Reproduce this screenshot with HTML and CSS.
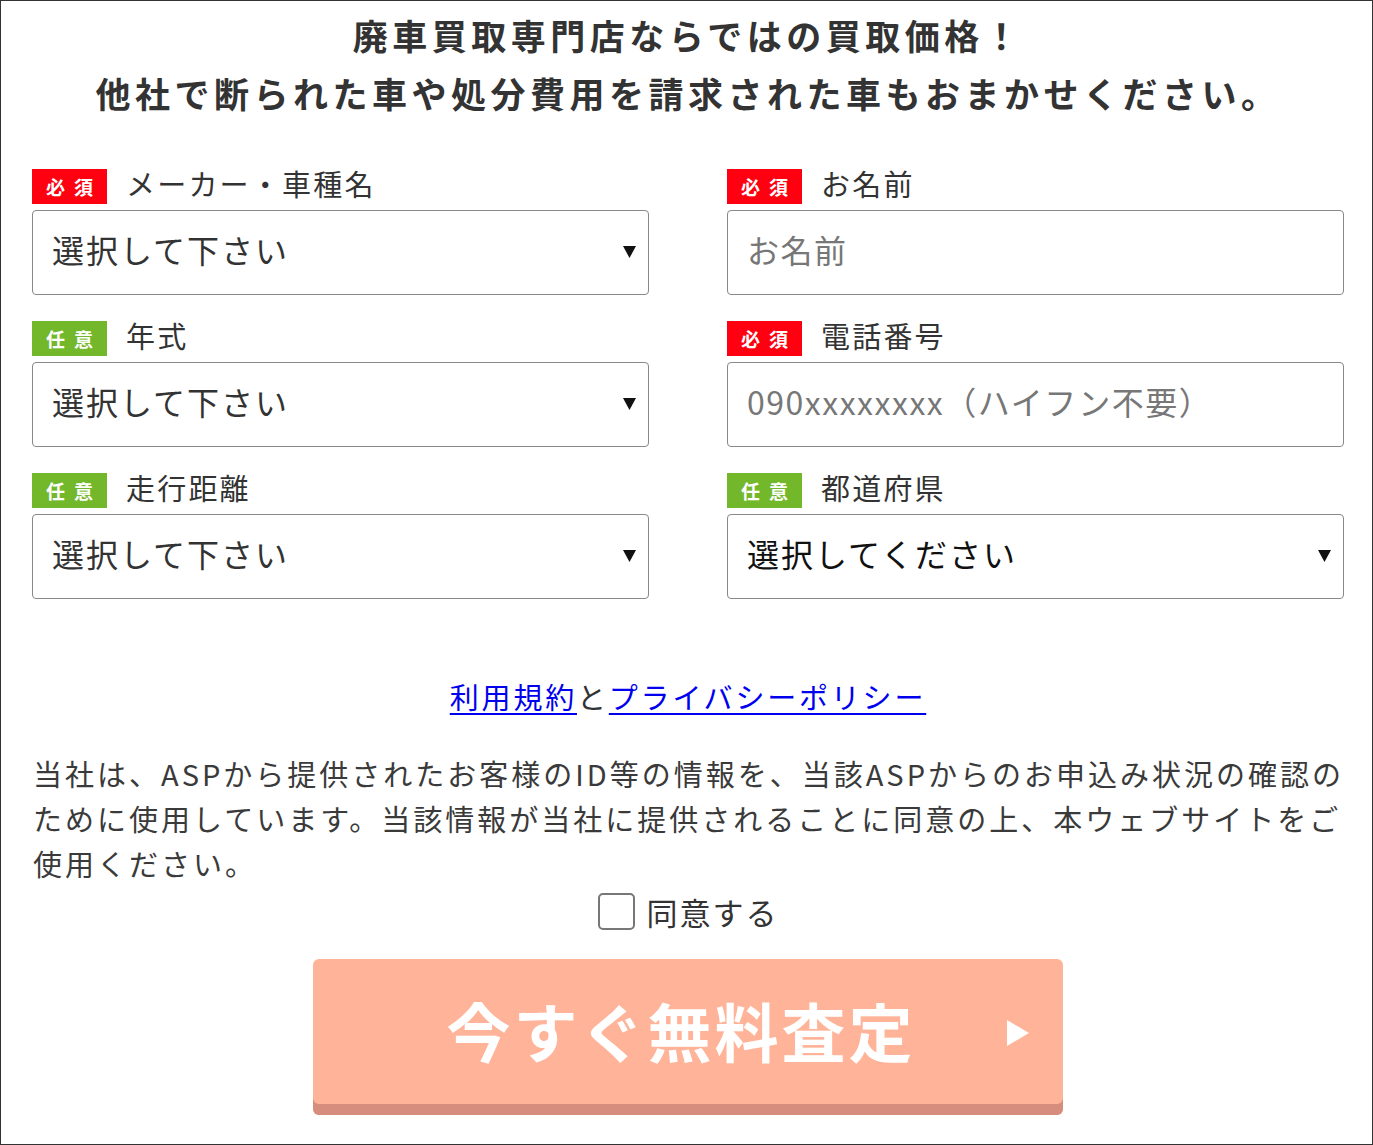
FILE: index.html
```html
<!DOCTYPE html>
<html lang="ja">
<head>
<meta charset="utf-8">
<title>無料査定フォーム</title>
<link rel="stylesheet" href="styles.css">
</head>
<body>
<div class="page">
  <h1 class="title">廃車買取専門店ならではの買取価格！<br>他社で断られた車や処分費用を請求された車もおまかせください。</h1>

  <div class="form-grid">
    <div class="col">
      <div class="field">
        <div class="label-row"><span class="badge badge-req">必須</span><span class="label">メーカー・車種名</span></div>
        <div class="select-wrap">
          <select class="control"><option>選択して下さい</option></select>
          <svg class="arrow" width="13" height="12" viewBox="0 0 13 12"><path d="M0 0H13L6.5 12Z" fill="#111"/></svg>
        </div>
      </div>
      <div class="field">
        <div class="label-row"><span class="badge badge-opt">任意</span><span class="label">年式</span></div>
        <div class="select-wrap">
          <select class="control"><option>選択して下さい</option></select>
          <svg class="arrow" width="13" height="12" viewBox="0 0 13 12"><path d="M0 0H13L6.5 12Z" fill="#111"/></svg>
        </div>
      </div>
      <div class="field">
        <div class="label-row"><span class="badge badge-opt">任意</span><span class="label">走行距離</span></div>
        <div class="select-wrap">
          <select class="control"><option>選択して下さい</option></select>
          <svg class="arrow" width="13" height="12" viewBox="0 0 13 12"><path d="M0 0H13L6.5 12Z" fill="#111"/></svg>
        </div>
      </div>
    </div>
    <div class="col">
      <div class="field">
        <div class="label-row"><span class="badge badge-req">必須</span><span class="label">お名前</span></div>
        <input class="control" type="text" placeholder="お名前">
      </div>
      <div class="field">
        <div class="label-row"><span class="badge badge-req">必須</span><span class="label">電話番号</span></div>
        <input class="control" type="tel" placeholder="090xxxxxxxx（ハイフン不要）">
      </div>
      <div class="field">
        <div class="label-row"><span class="badge badge-opt">任意</span><span class="label">都道府県</span></div>
        <div class="select-wrap">
          <select class="control dark"><option>選択してください</option></select>
          <svg class="arrow" width="13" height="12" viewBox="0 0 13 12"><path d="M0 0H13L6.5 12Z" fill="#111"/></svg>
        </div>
      </div>
    </div>
  </div>

  <p class="links"><a href="#">利用規約</a>と<a href="#">プライバシーポリシー</a></p>

  <p class="notice">当社は、ASPから提供されたお客様のID等の情報を、当該ASPからのお申込み状況の確認の<br>ために使用しています。当該情報が当社に提供されることに同意の上、本ウェブサイトをご<br>使用ください。</p>

  <label class="agree"><input type="checkbox" class="check"><span>同意する</span></label>

  <div class="submit-row">
    <button class="submit" type="button"><span class="submit-text">今すぐ無料査定</span><svg class="submit-arrow" width="22" height="26" viewBox="0 0 22 26"><path d="M0 0L22 13L0 26Z" fill="#fff"/></svg></button>
  </div>
</div>
</body>
</html>
```

FILE: styles.css
```css
* { box-sizing: border-box; }
html, body { margin: 0; padding: 0; background: #fff; }
body {
  font-family: "Noto Sans CJK JP", "Noto Sans", sans-serif;
  color: #333;
}
.page {
  width: 1373px;
  height: 1145px;
  border: 1px solid #333;
  padding: 0 28px 0 31px;
  overflow: hidden;
}
.title {
  margin: 5px 0 0;
  font-size: 35px;
  font-weight: 700;
  line-height: 58px;
  letter-spacing: 4.5px;
  text-align: center;
  color: #333;
}
.form-grid {
  margin-top: 47px;
  display: grid;
  grid-template-columns: 617px 617px;
  column-gap: 78px;
}
.field { margin-bottom: 26px; }
.col .field:last-child { margin-bottom: 0; }
.label-row {
  display: flex;
  align-items: center;
  height: 35px;
  margin-bottom: 6px;
}
.badge {
  width: 75px;
  height: 35px;
  display: inline-flex;
  align-items: center;
  justify-content: center;
  color: #fff;
  font-size: 19px;
  font-weight: 700;
  letter-spacing: 9px;
  padding-left: 9px;
  font-family: "Noto Sans CJK JP", serif;
}
.badge-req { background: #ff0010; }
.badge-opt { background: #73b72b; }
.label {
  margin-left: 19px;
  font-size: 29px;
  letter-spacing: 2.2px;
  color: #333;
  line-height: 1;
  margin-top: -6px;
}
.select-wrap { position: relative; }
.control {
  display: block;
  width: 100%;
  height: 85px;
  border: 1px solid #888;
  border-radius: 4px;
  background: #fff;
  padding: 0 0 8px 19px;
  font-family: "Noto Sans CJK JP", sans-serif;
  font-size: 32px;
  letter-spacing: 2px;
  color: #333;
  appearance: none;
  -webkit-appearance: none;
  outline: none;
}
.control.dark { color: #111; }
.control::placeholder { color: #777; letter-spacing: 1.5px; }
.arrow {
  position: absolute;
  right: 13px;
  top: 36px;
  pointer-events: none;
}
.links {
  margin: 75px 0 0;
  text-align: center;
  font-size: 29px;
  line-height: 45px;
  letter-spacing: 2.8px;
  color: #333;
}
.links a { color: #0000ee; text-decoration: underline; text-underline-offset: 4px; }
.notice {
  margin: 32px 0 0 1px;
  font-size: 29px;
  line-height: 45px;
  letter-spacing: 3px;
  white-space: nowrap;
  color: #3a3a3a;
}
.agree {
  margin-top: 5px;
  display: flex;
  justify-content: center;
  align-items: center;
  height: 40px;
  gap: 12px;
  font-size: 31px;
  letter-spacing: 2px;
  color: #333;
}
.check {
  appearance: none;
  -webkit-appearance: none;
  margin: 0;
  width: 37px;
  height: 37px;
  border: 2px solid #777;
  border-radius: 5px;
  background: #fff;
}
.submit-row {
  margin-top: 28px;
  display: flex;
  justify-content: center;
}
.submit {
  position: relative;
  width: 750px;
  height: 156px;
  border: none;
  border-radius: 6px;
  background: #ffb398;
  box-shadow: inset 0 -11px 0 #d68d7e;
  display: flex;
  align-items: center;
  justify-content: center;
  padding: 0 0 16px;
  font-family: "Noto Sans CJK JP", sans-serif;
  cursor: pointer;
}
.submit-text {
  color: #fff;
  font-size: 64px;
  font-weight: 700;
  letter-spacing: 3px;
  line-height: 1;
  margin-left: -14px;
}
.submit-arrow {
  position: absolute;
  right: 34px;
  top: 61px;
}
```
